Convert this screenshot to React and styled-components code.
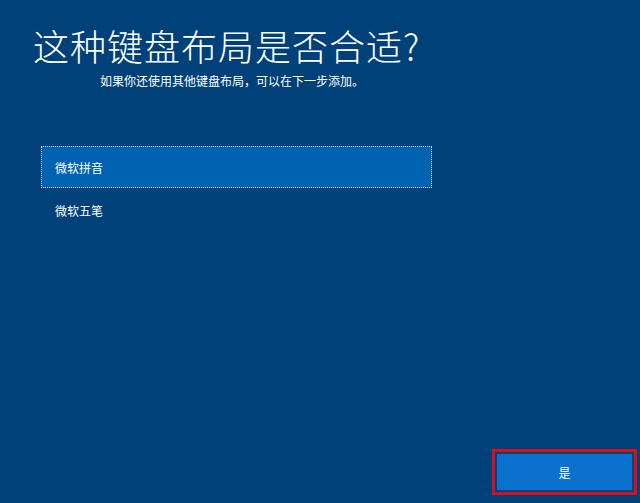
import React from "react";
import styled, { createGlobalStyle } from "styled-components";

const GlobalStyle = createGlobalStyle`
  html, body {
    margin: 0;
    padding: 0;
    background: #00417a;
  }
  body {
    font-family: "Noto Sans CJK SC", "Noto Sans", sans-serif;
    color: #fff;
  }
`;

const Page = styled.div`
  width: 640px;
  height: 503px;
  background: #00417a;
  display: flex;
  flex-direction: column;
  overflow: hidden;
`;

const Header = styled.header`
  width: 398px;
  margin-left: 33px;
  padding-top: 21px;
  text-align: center;
`;

const Title = styled.h1`
  margin: 0;
  font-size: 36px;
  font-weight: 300;
  line-height: 48px;
  letter-spacing: 1px;
  text-align: left;
  white-space: nowrap;
`;

const Subtitle = styled.p`
  margin: 4px 0 0;
  font-size: 12px;
  line-height: 16px;
`;

const List = styled.ul`
  list-style: none;
  margin: 57px 0 0 41px;
  padding: 0;
  width: 391px;
`;

const Item = styled.li`
  height: 42px;
  box-sizing: border-box;
  display: flex;
  align-items: center;
  padding-left: 13px;
  font-size: 12px;
  margin-bottom: 1px;
  background: ${(p) => (p.$selected ? "#0063b1" : "transparent")};
  border: 1px dotted ${(p) => (p.$selected ? "#c9dcee" : "transparent")};
`;

const Footer = styled.footer`
  margin-top: auto;
  display: flex;
  justify-content: flex-end;
  padding: 0 3px 8px 0;
`;

const Highlight = styled.div`
  border: 3px solid #d8101e;
  padding: 2px;
`;

const PrimaryButton = styled.button`
  display: block;
  width: 135px;
  height: 36px;
  border: none;
  background: #0a72cc;
  color: #fff;
  font-family: inherit;
  font-size: 12px;
  cursor: pointer;
`;

const layouts = ["微软拼音", "微软五笔"];

export default function App() {
  return (
    <Page>
      <GlobalStyle />
      <Header>
        <Title>这种键盘布局是否合适?</Title>
        <Subtitle>如果你还使用其他键盘布局，可以在下一步添加。</Subtitle>
      </Header>
      <List>
        {layouts.map((name, i) => (
          <Item key={name} $selected={i === 0}>
            {name}
          </Item>
        ))}
      </List>
      <Footer>
        <Highlight>
          <PrimaryButton>是</PrimaryButton>
        </Highlight>
      </Footer>
    </Page>
  );
}
